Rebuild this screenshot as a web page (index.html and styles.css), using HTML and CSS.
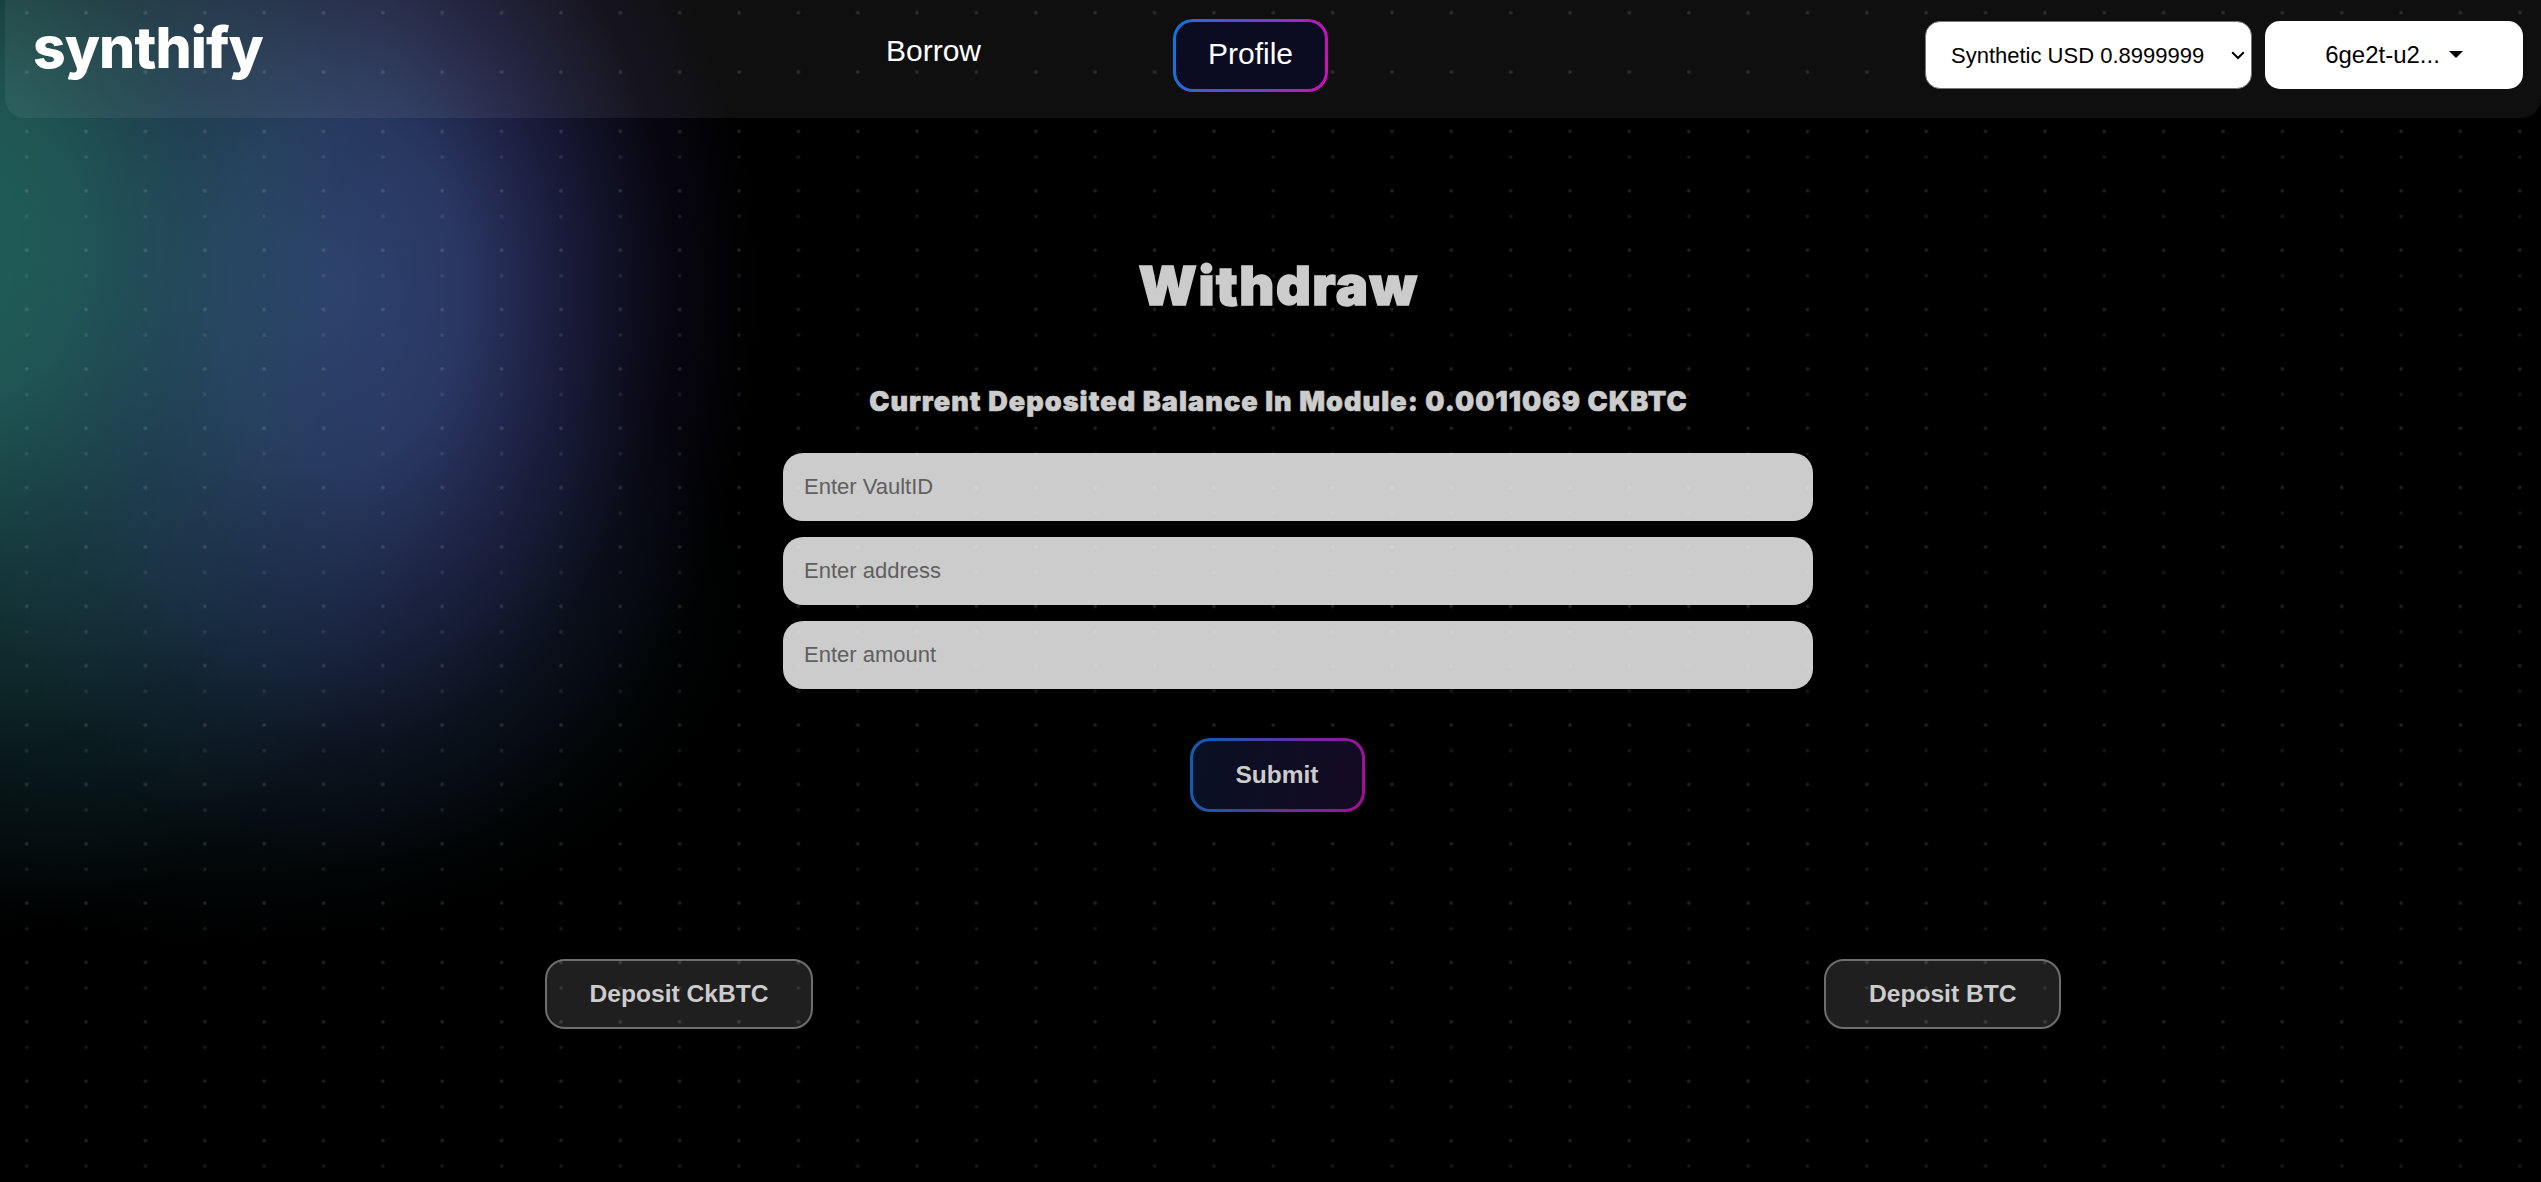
FILE: index.html
```html
<!DOCTYPE html>
<html lang="en">
<head>
<meta charset="utf-8">
<title>Synthify</title>
<link rel="stylesheet" href="styles.css">
</head>
<body>
<div class="glow"></div>
<div class="dots dots-under"></div>
<div class="dots dots-over"></div>
<header class="topbar">
  <div class="logo">synthify</div>
  <nav class="nav">
    <a class="nav-link">Borrow</a>
    <a class="nav-link nav-active">Profile</a>
  </nav>
  <div class="account">
    <div class="select-wrap">
      <select class="asset-select">
        <option>Synthetic USD 0.8999999</option>
      </select>
      <svg class="chevron" viewBox="0 0 14 9" width="14" height="9" aria-hidden="true"><path d="M1.2 1.2 7 7l5.8-5.8" fill="none" stroke="#000" stroke-width="2"/></svg>
    </div>
    <button class="wallet" type="button">6ge2t-u2...<span class="caret"></span></button>
  </div>
</header>
<main class="content">
  <h1 class="title">Withdraw</h1>
  <p class="balance">Current Deposited Balance In Module: 0.0011069 CKBTC</p>
  <form class="form">
    <input class="field" type="text" placeholder="Enter VaultID">
    <input class="field" type="text" placeholder="Enter address">
    <input class="field" type="text" placeholder="Enter amount">
  </form>
  <button class="submit" type="button">Submit</button>
  <div class="deposits">
    <button class="deposit" type="button">Deposit CkBTC</button>
    <button class="deposit" type="button">Deposit BTC</button>
  </div>
</main>
</body>
</html>
```
FILE: styles.css
```css
* { box-sizing: border-box; }
html, body { height: 100%; }
body {
  margin: 0;
  background: #000;
  color: #ccc;
  font-family: "Liberation Sans", Arial, sans-serif;
  overflow: hidden;
  position: relative;
}
.glow {
  position: absolute;
  inset: 0;
  background:
    radial-gradient(ellipse 560px 700px at -60px 240px,
      rgba(34,104,94,.95) 0,
      rgba(36,102,98,.8) 25%,
      rgba(34,90,92,.48) 50%,
      rgba(26,72,78,.2) 75%,
      rgba(20,60,70,0) 100%),
    radial-gradient(ellipse 420px 580px at 340px 290px,
      rgba(50,64,118,1) 0,
      rgba(48,60,112,.88) 30%,
      rgba(44,46,100,.56) 55%,
      rgba(40,34,88,.2) 78%,
      rgba(36,30,80,0) 100%),
    radial-gradient(ellipse 520px 340px at 220px 600px,
      rgba(20,64,72,.5) 0,
      rgba(18,54,62,.3) 50%,
      rgba(14,40,50,0) 100%);
}
.dots {
  position: absolute;
  left: 0;
  right: 0;
  bottom: 0;
  background-size: 59.36px 59.36px;
}
.dots-under {
  top: 118px;
  background-image: radial-gradient(circle, rgba(255,255,255,.1) 0, rgba(255,255,255,.08) 1.4px, transparent 2.4px);
  background-position: -2.98px 9.32px;
}
.dots-over {
  top: 0;
  z-index: 2;
  background-image: radial-gradient(circle, rgba(255,255,255,.14) 0, rgba(255,255,255,.11) 1.4px, transparent 2.4px);
  background-position: -2.98px -16.98px;
  pointer-events: none;
}
.topbar {
  position: relative;
  z-index: 3;
  height: 118px;
  margin-left: 5px;
  padding-left: 28px;
  display: flex;
  align-items: flex-start;
  background: rgba(255,255,255,.06);
  border-radius: 0 0 20px 20px;
}
.logo {
  width: 853px;
  margin-top: 13px;
  font-family: Inter, "Liberation Sans", sans-serif;
  font-weight: 800;
  font-size: 57px;
  line-height: 70px;
  color: #fff;
  letter-spacing: -.9px;
}
.nav {
  display: flex;
  align-items: flex-start;
  gap: 192px;
  margin-right: auto;
}
.nav-link {
  font-size: 30px;
  line-height: 36px;
  color: #fff;
  margin-top: 33px;
}
.nav-active {
  margin-top: 19px;
  width: 155px;
  height: 73px;
  padding-bottom: 4px;
  display: flex;
  align-items: center;
  justify-content: center;
  border: 3px solid transparent;
  border-radius: 20px;
  background: linear-gradient(#0b0b22, #0b0b22) padding-box, linear-gradient(100deg, #0a78e0, #d00cb8) border-box;
}
.account {
  display: flex;
  gap: 13px;
  margin-top: 21px;
  margin-right: 18px;
}
.select-wrap {
  position: relative;
  width: 327px;
  height: 68px;
}
.asset-select {
  appearance: none;
  width: 100%;
  height: 100%;
  padding-left: 25px;
  font-family: inherit;
  font-size: 22px;
  color: #000;
  background-color: #fff;
  border: 1px solid #767676;
  border-radius: 15px;
}
.chevron {
  position: absolute;
  right: 7px;
  top: 30px;
  pointer-events: none;
}
.wallet {
  width: 258px;
  height: 68px;
  display: flex;
  align-items: center;
  justify-content: center;
  font-family: inherit;
  font-size: 24px;
  color: #000;
  background: #fff;
  border: 0;
  border-radius: 15px;
}
.caret {
  margin-left: 9px;
  margin-bottom: 2px;
  border-top: 7.2px solid #000;
  border-left: 7.2px solid transparent;
  border-right: 7.2px solid transparent;
}
.content {
  display: flex;
  flex-direction: column;
  align-items: center;
  padding-left: 16px;
}
.title {
  margin: 138px 0 0;
  font-family: Inter, "Liberation Sans", sans-serif;
  font-weight: 900;
  font-size: 54px;
  line-height: 60px;
  letter-spacing: 1.5px;
  color: #ccc;
  -webkit-text-stroke: 1.5px #ccc;
}
.balance {
  margin: 71px 0 0;
  font-family: Inter, "Liberation Sans", sans-serif;
  font-weight: 900;
  font-size: 27px;
  line-height: 30px;
  letter-spacing: 1.08px;
  color: #ccc;
  -webkit-text-stroke: .6px #ccc;
}
.form {
  width: 1030px;
  margin: 36px 0 0 39px;
  display: flex;
  flex-direction: column;
  gap: 16.4px;
}
.field {
  height: 67.6px;
  padding: 0 21px;
  font-family: inherit;
  font-size: 22px;
  color: #222;
  background: #ccc;
  border: 0;
  border-radius: 20px;
  outline: 0;
}
.field::placeholder { color: #5f5f5f; opacity: 1; }
.submit {
  position: relative;
  z-index: 3;
  width: 175px;
  height: 74px;
  margin: 49.6px 3px 0 0;
  font-family: inherit;
  font-weight: 700;
  font-size: 24.5px;
  color: #ccc;
  border: 3px solid transparent;
  border-radius: 20px;
  background: linear-gradient(rgba(9,10,26,.93), rgba(9,10,26,.93)) padding-box, linear-gradient(100deg, #0a60b4, #a80c94) border-box;
}
.deposits {
  align-self: stretch;
  display: flex;
  justify-content: space-between;
  margin: 147px 480px 0 529px;
}
.deposit {
  height: 70px;
  padding: 0 42.5px;
  font-family: inherit;
  font-weight: 700;
  font-size: 24.6px;
  color: #ccc;
  background: rgba(255,255,255,.12);
  border: 2px solid #6e6e6e;
  border-radius: 20px;
}
```
